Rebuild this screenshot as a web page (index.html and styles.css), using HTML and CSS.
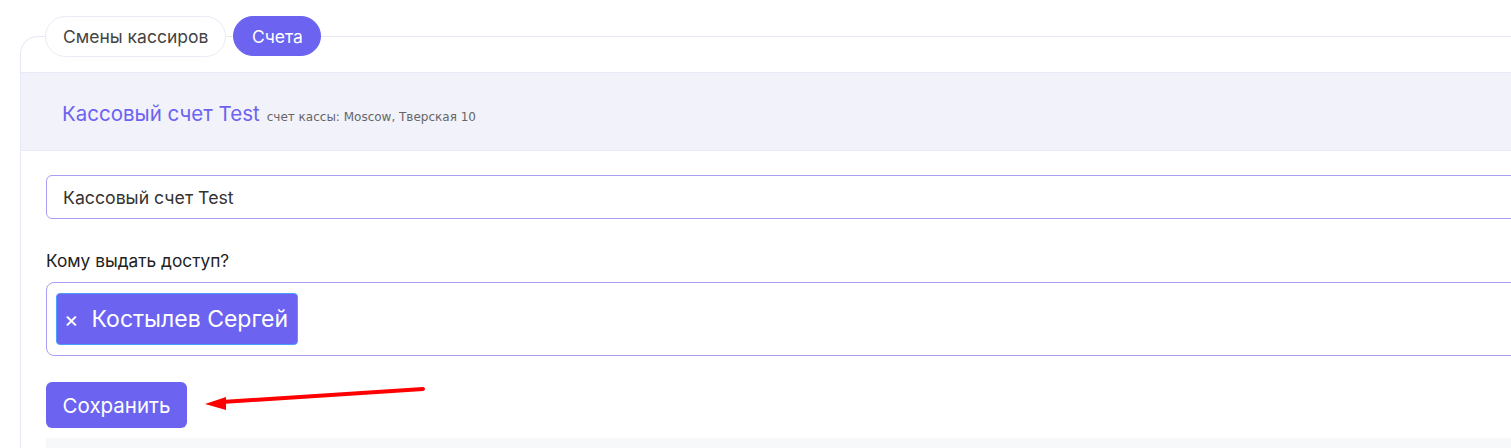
FILE: index.html
```html
<!DOCTYPE html>
<html lang="ru">
<head>
<meta charset="utf-8">
<link rel="stylesheet" href="styles.css">
</head>
<body>
<div class="page">
  <div class="tabs">
    <div class="tab">Смены кассиров</div>
    <div class="tab tab-active">Счета</div>
  </div>
  <div class="card">
    <div class="card-head">
      <span class="title">Кассовый счет Test</span>
      <span class="subtitle">счет кассы: Moscow, Тверская 10</span>
    </div>
    <div class="card-body">
      <div class="input">Кассовый счет Test</div>
      <div class="label">Кому выдать доступ?</div>
      <div class="multi">
        <div class="tag"><span class="tag-x">×</span><span>Костылев Сергей</span></div>
      </div>
      <div class="actions">
        <button class="btn">Сохранить</button>
        <svg class="arrow" width="240" height="40" viewBox="0 0 240 40">
          <line x1="221" y1="7" x2="20" y2="20" stroke="#f00" stroke-width="4" stroke-linecap="round"/>
          <polygon points="3,22 24,15 24,28" fill="#f00"/>
        </svg>
      </div>
      <div class="footer-strip"></div>
    </div>
  </div>
</div>
</body>
</html>
```
FILE: styles.css
```css
html, body {
  margin: 0;
  padding: 0;
  background: #ffffff;
  overflow: hidden;
}
body {
  width: 1511px;
  height: 448px;
  font-family: Inter, "Noto Sans", sans-serif;
  color: #333;
}
.page {
  padding: 16px 0 0 20px;
  width: 1700px;
}
.tabs {
  display: flex;
  gap: 7px;
  padding-left: 25px;
  position: relative;
  z-index: 2;
  height: 41px;
  margin-bottom: -21px;
}
.tab {
  box-sizing: border-box;
  height: 41px;
  padding: 0 17px;
  border: 1px solid #e9ebf4;
  border-radius: 21px;
  background: #fff;
  font-size: 17.5px;
  color: #444;
  display: flex;
  align-items: center;
}
.tab-active {
  background: #6c63f0;
  border-color: #6c63f0;
  color: #fff;
  height: 40px;
  padding: 0 17.5px;
}
.card {
  border: 1px solid #e6e9f5;
  border-right: none;
  border-bottom: none;
  border-top-left-radius: 18px;
  padding-top: 35px;
  position: relative;
  z-index: 1;
  height: 420px;
}
.card-head {
  height: 79px;
  background: #f2f2fb;
  border-top: 1px solid #eaeaf8;
  border-bottom: 1px solid #eaeaf8;
  display: flex;
  align-items: center;
  padding: 4px 0 0 41px;
  box-sizing: border-box;
}
.title {
  font-size: 20.5px;
  color: #6c63f0;
}
.subtitle {
  font-family: "DejaVu Sans", Verdana, sans-serif;
  font-size: 12px;
  color: #666;
  margin-left: 7px;
  margin-top: 6px;
}
.card-body {
  padding: 24px 0 0 25px;
}
.input {
  box-sizing: border-box;
  height: 44px;
  border: 1px solid #a79ff3;
  border-radius: 6px;
  padding: 0 16px;
  display: flex;
  align-items: center;
  font-size: 17.7px;
  color: #333;
}
.label {
  margin-top: 31px;
  font-size: 17.3px;
  color: #222;
  height: 22px;
}
.multi {
  box-sizing: border-box;
  margin-top: 10px;
  height: 74px;
  border: 1px solid #a79ff3;
  border-radius: 8px;
  padding: 10px 9px;
}
.tag {
  box-sizing: border-box;
  display: inline-flex;
  align-items: center;
  height: 52px;
  padding: 0 9px 0 7px;
  background: #6c63f0;
  border: 1px solid #4aa0ff;
  border-radius: 4px;
  color: #fff;
  font-size: 23px;
}
.tag-x {
  font-size: 22px;
  margin-right: 13px;
}
.actions {
  margin-top: 26px;
  display: flex;
  align-items: flex-start;
}
.btn {
  box-sizing: border-box;
  height: 46px;
  width: 141px;
  padding: 0;
  background: #6c63f0;
  border: none;
  border-radius: 6px;
  color: #fff;
  font-family: Inter, "Noto Sans", sans-serif;
  font-size: 20.5px;
}
.arrow {
  margin-left: 15px;
}
.footer-strip {
  margin-top: 10px;
  height: 40px;
  background: #f7f8fa;
}
```
